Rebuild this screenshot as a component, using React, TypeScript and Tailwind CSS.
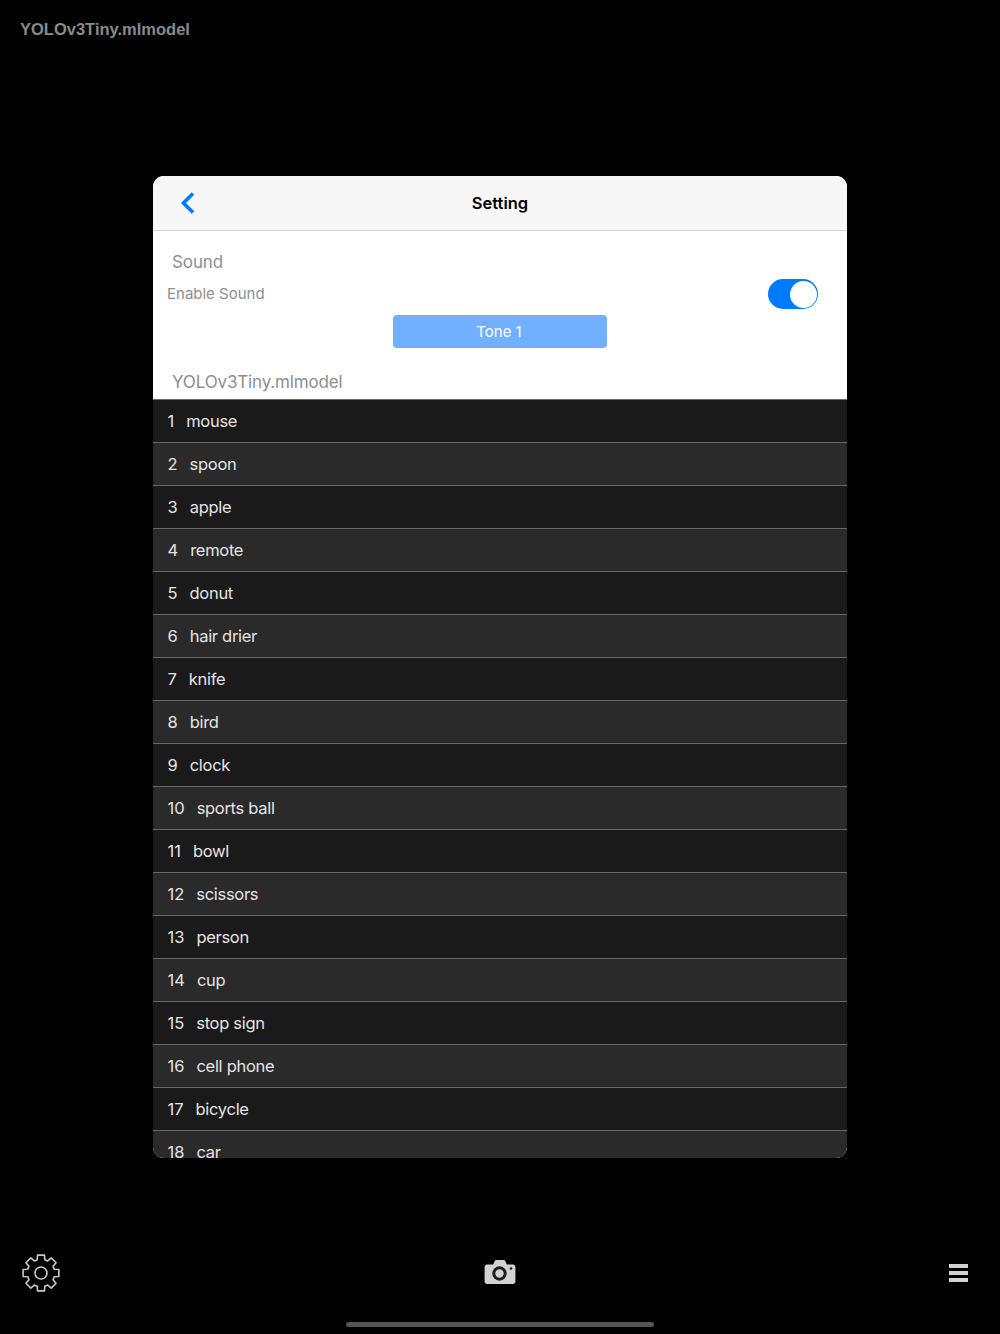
import React from 'react';

const labels = [
  'mouse', 'spoon', 'apple', 'remote', 'donut', 'hair drier', 'knife', 'bird', 'clock',
  'sports ball', 'bowl', 'scissors', 'person', 'cup', 'stop sign', 'cell phone', 'bicycle', 'car',
];

function gearPath() {
  const cx = 20;
  const cy = 20;
  const parts: string[] = [];
  for (let i = 0; i < 8; i++) {
    const a = (i * Math.PI) / 4 - Math.PI / 2;
    const pts: [number, number][] = [
      [a - 0.28, 13.8],
      [a - 0.19, 18.2],
      [a + 0.19, 18.2],
      [a + 0.28, 13.8],
    ];
    pts.forEach(([t, r]) => {
      const x = (cx + r * Math.cos(t)).toFixed(2);
      const y = (cy + r * Math.sin(t)).toFixed(2);
      parts.push(`${parts.length === 0 ? 'M' : 'L'}${x} ${y}`);
    });
  }
  return parts.join(' ') + ' Z';
}

function Row({ n, label }: { n: number; label: string }) {
  const dark = n % 2 === 1;
  return (
    <div
      className={`flex h-[43px] shrink-0 items-center border-b border-[#6a6a6a] pl-[14.5px] text-[16.5px] tracking-[-0.3px] text-[#e4e4e4] ${
        dark ? 'bg-[#1a1a1a]' : 'bg-[#2a2a2a]'
      }`}
    >
      <span className="tracking-normal">{n}</span>
      <span className="ml-[12px]">{label}</span>
    </div>
  );
}

export default function App() {
  return (
    <div
      className="flex h-[1334px] w-[1000px] flex-col overflow-hidden bg-black"
      style={{ fontFamily: 'Inter, "Liberation Sans", sans-serif' }}
    >
      {/* Top model name */}
      <div
        className="h-[176px] shrink-0 pl-[20px] pt-[19px] text-[16.5px] font-bold leading-[20px] text-[#8a8a8a]"
        style={{ fontFamily: '"Liberation Sans", sans-serif' }}
      >
        YOLOv3Tiny.mlmodel
      </div>

      {/* Settings panel */}
      <div className="mx-[153px] flex h-[982px] shrink-0 flex-col overflow-hidden rounded-[11px] bg-white">
        <div className="relative flex h-[55px] shrink-0 items-center justify-center border-b border-[#d6d6d6] bg-[#f7f7f7] text-[16.5px] font-semibold text-black">
          <svg className="absolute left-[27px] top-[15px]" width="16" height="24" viewBox="0 0 16 24" fill="none">
            <path d="M13 2.5 3.5 12l9.5 9.5" stroke="#007aff" strokeWidth="3.6" />
          </svg>
          Setting
        </div>

        <div className="flex h-[169px] shrink-0 flex-col border-b border-[#6a6a6a] text-[#8e8e93]">
          <div className="pl-[19px] pt-[20px] text-[17px] leading-[22px] tracking-[-0.1px]">Sound</div>
          <div className="mt-[6px] flex h-[30px] items-center justify-between pl-[14px] pr-[29px] text-[15px]">
            <span>Enable Sound</span>
            <div className="flex h-[30px] w-[50px] items-center justify-end rounded-full bg-[#007aff] pr-[1px]">
              <div className="h-[27px] w-[27px] rounded-full bg-white" />
            </div>
          </div>
          <div className="mt-[6px] flex justify-center">
            <div className="flex h-[33px] w-[214px] items-center justify-center rounded-[4px] bg-[#70b0ff] pt-[2px] pr-[2px] text-[15px] text-white">
              Tone 1
            </div>
          </div>
          <div className="pl-[19px] pt-[23px] text-[17px] leading-[22px] tracking-[-0.15px]">YOLOv3Tiny.mlmodel</div>
        </div>

        {labels.map((label, i) => (
          <Row key={label} n={i + 1} label={label} />
        ))}
      </div>

      {/* Bottom toolbar */}
      <div className="flex flex-1 flex-col">
        <div className="mt-[95px] flex h-[40px] items-center">
          <div className="flex flex-1">
            <svg className="ml-[21px]" width="40" height="40" viewBox="0 0 40 40" fill="none" stroke="#c8c8c8" strokeWidth="1.6">
              <path d={gearPath()} strokeLinejoin="round" />
              <circle cx="20" cy="20" r="6" />
            </svg>
          </div>
          <svg className="mb-[3px]" width="32" height="26" viewBox="0 0 32 26">
            <path
              d="M3 5.5h6.2L11 1.6c.2-.4.6-.6 1-.6h8c.4 0 .8.2 1 .6l1.800 3.900H29c1.300 0 2.400 1 2.400 2.400v14.700c0 1.300-1.100 2.400-2.400 2.400H3c-1.300 0-2.400-1.100-2.400-2.400V7.900C.6 6.500 1.700 5.500 3 5.500Z"
              fill="#d2d2d2"
            />
            <circle cx="15.500" cy="14.500" r="7.200" fill="#1c1c1c" />
            <circle cx="15.500" cy="14.500" r="4.200" fill="#d2d2d2" />
            <circle cx="27" cy="9.500" r="1.300" fill="#1c1c1c" />
          </svg>
          <div className="flex flex-1 justify-end">
            <div className="mr-[32px] flex w-[19px] flex-col gap-[3px]">
              <div className="h-[4px] bg-[#d2d2d2]" />
              <div className="h-[4px] bg-[#d2d2d2]" />
              <div className="h-[4px] bg-[#d2d2d2]" />
            </div>
          </div>
        </div>
        <div className="mx-auto mt-[29px] h-[5px] w-[308px] rounded-full bg-[#555555]" />
      </div>
    </div>
  );
}
